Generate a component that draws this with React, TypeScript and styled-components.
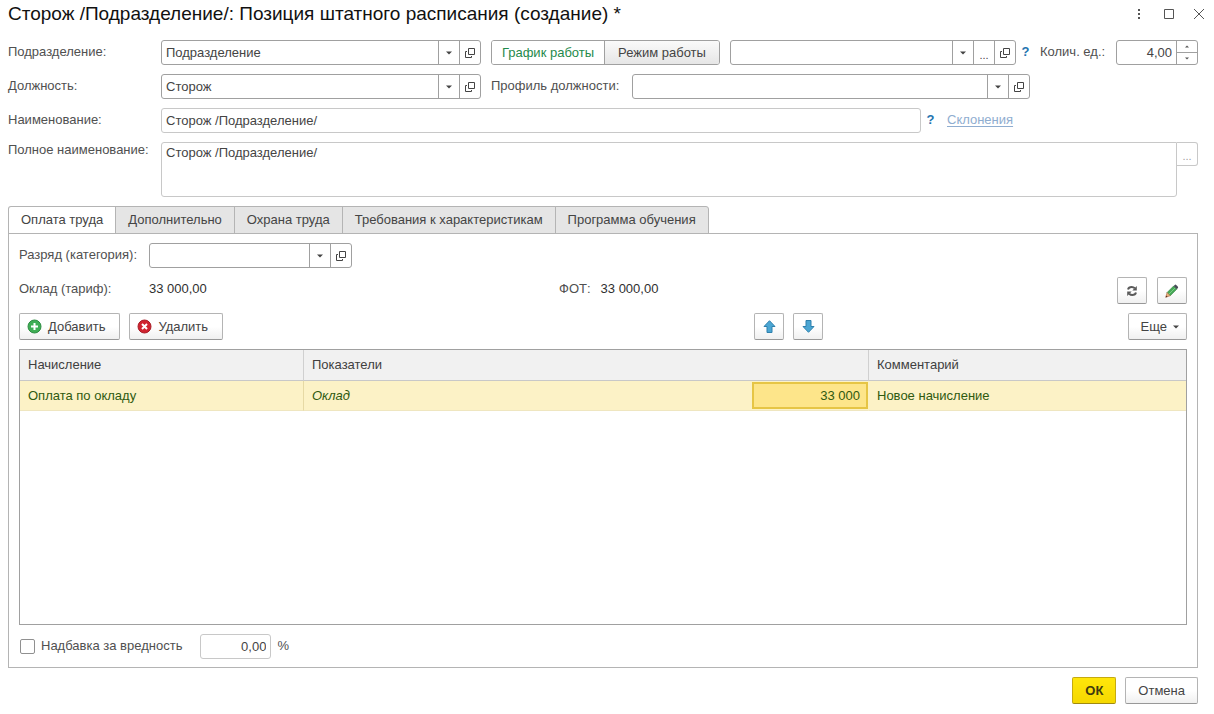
import React, { useState } from "react";
import styled, { createGlobalStyle, css } from "styled-components";

const GlobalStyle = createGlobalStyle`
  *, *::before, *::after { box-sizing: border-box; }
  body {
    margin: 0;
    background: #fff;
    color: #505050;
    font: 13px/16px "Liberation Sans", Arial, sans-serif;
  }
  button, input, textarea {
    font: inherit;
    color: #444;
    margin: 0;
  }
`;

const line = "#a0a0a0";
const softLine = "#c8c8c8";

const Window = styled.div`
  display: flex;
  flex-direction: column;
  min-height: 100vh;
  padding: 0 16px 10px 8px;
`;

const TitleBar = styled.header`
  display: flex;
  align-items: center;
  justify-content: space-between;
  height: 28px;
  margin-bottom: 12px;
`;

const Title = styled.h1`
  margin: 0;
  font-size: 19px;
  line-height: 24px;
  font-weight: 400;
  color: #111;
`;

const WindowControls = styled.div`
  display: flex;
  gap: 10px;
  margin-right: -11px;
`;

const WindowButton = styled.button`
  display: flex;
  align-items: center;
  justify-content: center;
  width: 20px;
  height: 20px;
  padding: 0;
  border: 0;
  background: none;
`;

const Form = styled.div`
  display: flex;
  flex-direction: column;
  gap: 9px;
`;

const FormRow = styled.div`
  display: flex;
  align-items: flex-start;
  gap: 10px;
`;

const Label = styled.label<{ $width?: number; $top?: boolean }>`
  flex: none;
  line-height: 16px;
  padding-top: ${(p) => (p.$top ? 0 : 4)}px;
  white-space: nowrap;
  ${(p) => p.$width && css`width: ${p.$width}px;`}
`;

const LeadLabel = styled(Label)`
  margin-right: -10px;
`;

const FieldBox = styled.div<{ $size?: string; $soft?: boolean }>`
  display: flex;
  flex: ${(p) => p.$size ?? "1 1 0"};
  min-width: 0;
  height: 25px;
  border: 1px solid ${(p) => (p.$soft ? softLine : line)};
  border-radius: 3px;
  background: #fff;
  overflow: hidden;
`;

const FieldInput = styled.input<{ $right?: boolean }>`
  flex: 1;
  width: 100%;
  min-width: 0;
  padding: 0 4px;
  border: 0;
  outline: 0;
  background: none;
  text-align: ${(p) => (p.$right ? "right" : "left")};
`;

const FieldButton = styled.button`
  display: flex;
  flex: none;
  align-items: center;
  justify-content: center;
  width: 21px;
  padding: 0;
  border: 0;
  border-left: 1px solid ${line};
  background: none;
`;

const MoreButton = styled(FieldButton)`
  padding-top: 4px;
  font-size: 11px;
`;

const Spinner = styled.div`
  display: flex;
  flex: none;
  flex-direction: column;
  width: 21px;
  border-left: 1px solid ${line};
`;

const SpinButton = styled.button`
  display: flex;
  flex: 1;
  align-items: center;
  justify-content: center;
  padding: 0;
  border: 0;
  background: none;
  & + & { border-top: 1px solid ${line}; }
`;

const Segmented = styled.div`
  display: flex;
  flex: none;
  height: 25px;
  border: 1px solid ${line};
  border-radius: 3px;
  overflow: hidden;
`;

const Segment = styled.button<{ $active: boolean }>`
  width: 112px;
  padding: 0;
  border: 0;
  color: ${(p) => (p.$active ? "#1f8a4c" : "#444")};
  background: ${(p) => (p.$active ? "#fff" : "linear-gradient(#fafafa, #e6e6e6)")};
  & + & {
    width: 115px;
    border-left: 1px solid ${line};
  }
`;

const Help = styled.button`
  flex: none;
  height: 24px;
  width: 9px;
  padding: 0;
  border: 0;
  background: none;
  color: #1f74b0;
  font-weight: 700;
`;

const CountGroup = styled.div`
  display: flex;
  flex: none;
  gap: 9px;
`;

const HelpGroup = styled.div`
  display: flex;
  gap: 10px;
  margin-left: -5px;
`;

const Link = styled.a`
  padding-top: 4px;
  margin-left: 2px;
  color: #8fadd0;
  text-underline-offset: 2px;
`;

const FullName = styled.textarea`
  flex: 1;
  min-width: 0;
  height: 55px;
  padding: 2px 4px;
  border: 1px solid ${softLine};
  border-radius: 3px 0 3px 3px;
  outline: 0;
  resize: none;
`;

const SideButton = styled.button`
  flex: none;
  width: 21px;
  height: 24px;
  margin-left: -10px;
  padding: 4px 0 0;
  border: 1px solid ${softLine};
  border-left: 0;
  border-radius: 0 3px 3px 0;
  background: #fff;
  color: #a0a0a0;
  font-size: 11px;
`;

const Tabs = styled.div`
  display: flex;
  margin-top: 9px;
  margin-bottom: -1px;
`;

const Tab = styled.button<{ $active: boolean }>`
  height: 28px;
  padding: 0 12px 1px;
  border: 1px solid #b4b4b4;
  border-bottom-color: ${(p) => (p.$active ? "#fff" : "#b4b4b4")};
  background: ${(p) => (p.$active ? "#fff" : "#e5e5e5")};
  & + & { margin-left: -1px; }
  &:first-child { border-top-left-radius: 3px; }
  &:last-child { border-top-right-radius: 3px; }
`;

const Panel = styled.section`
  display: flex;
  flex: 1;
  flex-direction: column;
  gap: 9px;
  padding: 9px 10px 8px;
  border: 1px solid #b4b4b4;
`;

const Summary = styled.div`
  display: grid;
  grid-template-columns: minmax(0, 540fr) minmax(0, 628fr);
  height: 27px;
`;

const SummaryPart = styled.div`
  display: flex;
  gap: 10px;
`;

const Actions = styled.div`
  display: flex;
  gap: 10px;
  margin-left: auto;
`;

const Amount = styled.output`
  padding-top: 4px;
  color: #303030;
`;

const Toolbar = styled.div`
  display: grid;
  grid-template-columns: minmax(0, 735fr) minmax(0, 433fr);
`;

const ToolGroup = styled.div`
  display: flex;
  gap: 9px;
`;

const Button = styled.button<{ $icon?: boolean; $primary?: boolean; $push?: boolean }>`
  display: flex;
  align-items: center;
  justify-content: center;
  gap: 6px;
  height: 27px;
  width: ${(p) => (p.$icon ? "30px" : "auto")};
  padding: ${(p) => (p.$icon ? "0" : "0 12px")};
  border: 1px solid #b4b4b4;
  border-bottom-color: #989898;
  border-radius: 2px;
  background: linear-gradient(#fff 50%, #f0f0f0);
  ${(p) => p.$push && css`margin-left: auto; padding: 0 7px 0 12px;`}
  ${(p) =>
    p.$primary &&
    css`
      border-color: #c5aa10;
      border-bottom-color: #a08a10;
      background: linear-gradient(#ffe60a, #f5d800);
      color: #403a10;
      font-weight: 700;
    `}
`;

const WideButton = styled(Button)`
  padding: 0 14px 0 7px;
`;

const TableBox = styled.div`
  flex: 1;
  min-height: 160px;
  border: 1px solid ${line};
`;

const Table = styled.table`
  width: 100%;
  border-collapse: separate;
  border-spacing: 0;
  table-layout: fixed;
  text-align: left;
`;

const NameCol = styled.col`width: 283px;`;
const ValueCol = styled.col`width: 116px;`;
const CommentCol = styled.col`width: 318px;`;

const HeadCell = styled.th`
  height: 31px;
  padding: 0 8px;
  border-bottom: 1px solid #c8c8c8;
  background: #f1f1f1;
  color: #404040;
  font-weight: 400;
  & + & { border-left: 1px solid #d0d0d0; }
`;

const Cell = styled.td<{ $italic?: boolean; $line?: string }>`
  height: 30px;
  padding: 0 8px;
  border-bottom: 1px solid #efe6c0;
  border-left: ${(p) => (p.$line ? `1px solid ${p.$line}` : "0")};
  background: #fcf2c6;
  color: #2f5a10;
  font-style: ${(p) => (p.$italic ? "italic" : "normal")};
`;

const ValueCell = styled(Cell)`
  padding: 0;
`;

const ActiveValue = styled.div`
  height: 27px;
  padding: 0 6px 0 0;
  border: 2px solid #e6c545;
  background: #fde58a;
  line-height: 23px;
  text-align: right;
`;

const Allowance = styled.div`
  display: flex;
  align-items: flex-start;
  gap: 6px;
`;

const Checkbox = styled.input`
  appearance: none;
  width: 15px;
  height: 15px;
  margin: 5px 0 0 1px;
  border: 1px solid #909090;
  border-radius: 2px;
  background: #fff;
  &:checked { background: #5b9a3c; }
`;

const PercentBox = styled(FieldBox)`
  margin-left: 12px;
`;

const Footer = styled.footer`
  display: flex;
  justify-content: flex-end;
  gap: 9px;
  margin-top: 9px;
`;

const CaretIcon = () => (
  <svg width="6" height="4" viewBox="0 0 6 4" aria-hidden="true">
    <path d="M0 .5h6L3 3.5z" fill="#444" />
  </svg>
);

const OpenIcon = () => (
  <svg width="10" height="10" viewBox="0 0 10 10" fill="none" stroke="#444" aria-hidden="true">
    <path d="M3.5.5h6v6h-6z" />
    <path d="M2 3.5H.5v6h6V8" />
  </svg>
);

const DotsIcon = () => (
  <svg width="10" height="12" viewBox="0 0 10 12" fill="#555" aria-hidden="true">
    <path d="M4 1h2v2H4zM4 5h2v2H4zM4 9h2v2H4z" />
  </svg>
);

const MaximizeIcon = () => (
  <svg width="10" height="10" viewBox="0 0 10 10" fill="none" stroke="#555" aria-hidden="true">
    <path d="M.5.5h9v9h-9z" />
  </svg>
);

const CloseIcon = () => (
  <svg width="12" height="12" viewBox="0 0 12 12" fill="none" stroke="#555" aria-hidden="true">
    <path d="M1 1l10 10M11 1L1 11" />
  </svg>
);

const AddIcon = () => (
  <svg width="15" height="15" viewBox="0 0 15 15" aria-hidden="true">
    <circle cx="7.5" cy="7.5" r="6.5" fill="#3fae55" stroke="#2c8c41" />
    <path d="M7.5 4v7M4 7.5h7" stroke="#fff" strokeWidth="2" />
  </svg>
);

const RemoveIcon = () => (
  <svg width="15" height="15" viewBox="0 0 15 15" aria-hidden="true">
    <circle cx="7.5" cy="7.5" r="6.5" fill="#d0242f" stroke="#a81c26" />
    <path d="M5 5l5 5M10 5l-5 5" stroke="#fff" strokeWidth="2" />
  </svg>
);

const ArrowIcon = ({ down = false }: { down?: boolean }) => (
  <svg width="13" height="13" viewBox="0 0 13 13" aria-hidden="true">
    <path
      d={down ? "M4 .5h5v6h3L6.5 12.3 1 6.5h3z" : "M4 12.5h5v-6h3L6.5.7 1 6.5h3z"}
      fill="#4ba6d3"
      stroke="#2f80ad"
      strokeLinejoin="round"
    />
  </svg>
);

const RefreshIcon = () => (
  <svg width="12" height="12" viewBox="0 0 12 12" fill="none" stroke="#5a5a5a" strokeWidth="2" aria-hidden="true">
    <path d="M2 4.500C2.500 2.700 4 2 5.700 2c1.300 0 2.300.5 3.100 1.300" />
    <path d="M10 7.500C9.500 9.300 8 10 6.300 10c-1.300 0-2.300-.5-3.100-1.300" />
    <path d="M10.800 1v4.500H6.300zM1.200 11V6.500h4.500z" fill="#5a5a5a" stroke="none" />
  </svg>
);

const PencilIcon = () => (
  <svg width="14" height="14" viewBox="0 0 15 15" aria-hidden="true">
    <path d="M2.200 9.200l7-7 3.400 3.400-7 7z" fill="#46a856" stroke="#2f7d3f" strokeWidth=".6" />
    <path d="M4 11l7-7" stroke="#7fd08a" />
    <path d="M9.200 2.200l1.600-1.500c.5-.4 3.600 2.500 3.200 3.200l-1.400 1.700z" fill="#474d57" />
    <path d="M2.200 9.200l3.400 3.400L.8 14.200z" fill="#e8b27c" stroke="#a8623a" strokeWidth=".6" />
    <path d="M1.400 12.200l1.400 1.400-2.200.8z" fill="#5a2a20" />
  </svg>
);

const SpinIcon = ({ down = false }: { down?: boolean }) => (
  <svg width="4" height="3" viewBox="0 0 4 3" aria-hidden="true">
    <path d={down ? "M0 .5h4L2 2.500z" : "M0 2.500h4L2 .5z"} fill="#555" />
  </svg>
);

interface ComboProps {
  id: string;
  value?: string;
  size?: string;
  more?: boolean;
  label?: string;
}

const Combo = ({ id, value = "", size, more, label }: ComboProps) => (
  <FieldBox $size={size}>
    <FieldInput id={id} defaultValue={value} aria-label={label} />
    <FieldButton aria-label="Выбрать из списка"><CaretIcon /></FieldButton>
    {more && <MoreButton aria-label="Показать все">...</MoreButton>}
    <FieldButton aria-label="Открыть"><OpenIcon /></FieldButton>
  </FieldBox>
);

const tabs = [
  "Оплата труда",
  "Дополнительно",
  "Охрана труда",
  "Требования к характеристикам",
  "Программа обучения",
];

export default function App() {
  const [tab, setTab] = useState(0);
  const [mode, setMode] = useState(0);

  return (
    <>
      <GlobalStyle />
      <Window>
        <TitleBar>
          <Title>Сторож /Подразделение/: Позиция штатного расписания (создание) *</Title>
          <WindowControls>
            <WindowButton aria-label="Меню"><DotsIcon /></WindowButton>
            <WindowButton aria-label="Развернуть"><MaximizeIcon /></WindowButton>
            <WindowButton aria-label="Закрыть"><CloseIcon /></WindowButton>
          </WindowControls>
        </TitleBar>

        <Form>
          <FormRow>
            <LeadLabel htmlFor="department" $width={153}>Подразделение:</LeadLabel>
            <Combo id="department" value="Подразделение" size="0 1 320px" />
            <Segmented>
              {["График работы", "Режим работы"].map((name, i) => (
                <Segment key={name} $active={mode === i} onClick={() => setMode(i)}>{name}</Segment>
              ))}
            </Segmented>
            <Combo id="schedule" label="График работы" more />
            <HelpGroup>
              <Help aria-label="Справка">?</Help>
              <CountGroup>
                <Label htmlFor="count" $width={67}>Колич. ед.:</Label>
                <FieldBox $size="0 0 82px">
                  <FieldInput id="count" defaultValue="4,00" inputMode="decimal" $right />
                  <Spinner>
                    <SpinButton aria-label="Увеличить"><SpinIcon /></SpinButton>
                    <SpinButton aria-label="Уменьшить"><SpinIcon down /></SpinButton>
                  </Spinner>
                </FieldBox>
              </CountGroup>
            </HelpGroup>
          </FormRow>

          <FormRow>
            <LeadLabel htmlFor="position" $width={153}>Должность:</LeadLabel>
            <Combo id="position" value="Сторож" size="0 1 320px" />
            <Label htmlFor="profile" $width={131}>Профиль должности:</Label>
            <Combo id="profile" size="0 1 398px" />
          </FormRow>

          <FormRow>
            <LeadLabel htmlFor="name" $width={153}>Наименование:</LeadLabel>
            <FieldBox $size="0 1 760px" $soft>
              <FieldInput id="name" defaultValue="Сторож /Подразделение/" />
            </FieldBox>
            <HelpGroup>
              <Help aria-label="Справка">?</Help>
              <Link href="#declension">Склонения</Link>
            </HelpGroup>
          </FormRow>

          <FormRow>
            <LeadLabel htmlFor="fullname" $width={153} $top>Полное наименование:</LeadLabel>
            <FullName id="fullname" defaultValue="Сторож /Подразделение/" />
            <SideButton aria-label="Изменить полное наименование">...</SideButton>
          </FormRow>
        </Form>

        <Tabs role="tablist">
          {tabs.map((name, i) => (
            <Tab key={name} role="tab" aria-selected={tab === i} $active={tab === i} onClick={() => setTab(i)}>
              {name}
            </Tab>
          ))}
        </Tabs>

        <Panel role="tabpanel">
          <FormRow>
            <LeadLabel htmlFor="grade" $width={130}>Разряд (категория):</LeadLabel>
            <Combo id="grade" size="0 1 203px" />
          </FormRow>

          <Summary>
            <SummaryPart>
              <LeadLabel htmlFor="salary" $width={130}>Оклад (тариф):</LeadLabel>
              <Amount id="salary">33 000,00</Amount>
            </SummaryPart>
            <SummaryPart>
              <Label htmlFor="fund">ФОТ:</Label>
              <Amount id="fund">33 000,00</Amount>
              <Actions>
                <Button $icon aria-label="Обновить"><RefreshIcon /></Button>
                <Button $icon aria-label="Редактировать"><PencilIcon /></Button>
              </Actions>
            </SummaryPart>
          </Summary>

          <Toolbar>
            <ToolGroup>
              <WideButton><AddIcon />Добавить</WideButton>
              <WideButton><RemoveIcon />Удалить</WideButton>
            </ToolGroup>
            <ToolGroup>
              <Button $icon aria-label="Переместить вверх"><ArrowIcon /></Button>
              <Button $icon aria-label="Переместить вниз"><ArrowIcon down /></Button>
              <Button $push>Еще<CaretIcon /></Button>
            </ToolGroup>
          </Toolbar>

          <TableBox>
            <Table>
              <colgroup>
                <NameCol />
                <col />
                <ValueCol />
                <CommentCol />
              </colgroup>
              <thead>
                <tr>
                  <HeadCell>Начисление</HeadCell>
                  <HeadCell colSpan={2}>Показатели</HeadCell>
                  <HeadCell>Комментарий</HeadCell>
                </tr>
              </thead>
              <tbody>
                <tr>
                  <Cell>Оплата по окладу</Cell>
                  <Cell $italic $line="#e6d9a4">Оклад</Cell>
                  <ValueCell><ActiveValue>33 000</ActiveValue></ValueCell>
                  <Cell $line="#fcf2c6">Новое начисление</Cell>
                </tr>
              </tbody>
            </Table>
          </TableBox>

          <Allowance>
            <Checkbox type="checkbox" id="hazard" />
            <Label htmlFor="hazard">Надбавка за вредность</Label>
            <PercentBox $size="0 0 71px" $soft>
              <FieldInput id="percent" defaultValue="0,00" aria-label="Процент надбавки" $right />
            </PercentBox>
            <Label htmlFor="percent">%</Label>
          </Allowance>
        </Panel>

        <Footer>
          <Button $primary>ОК</Button>
          <Button>Отмена</Button>
        </Footer>
      </Window>
    </>
  );
}
